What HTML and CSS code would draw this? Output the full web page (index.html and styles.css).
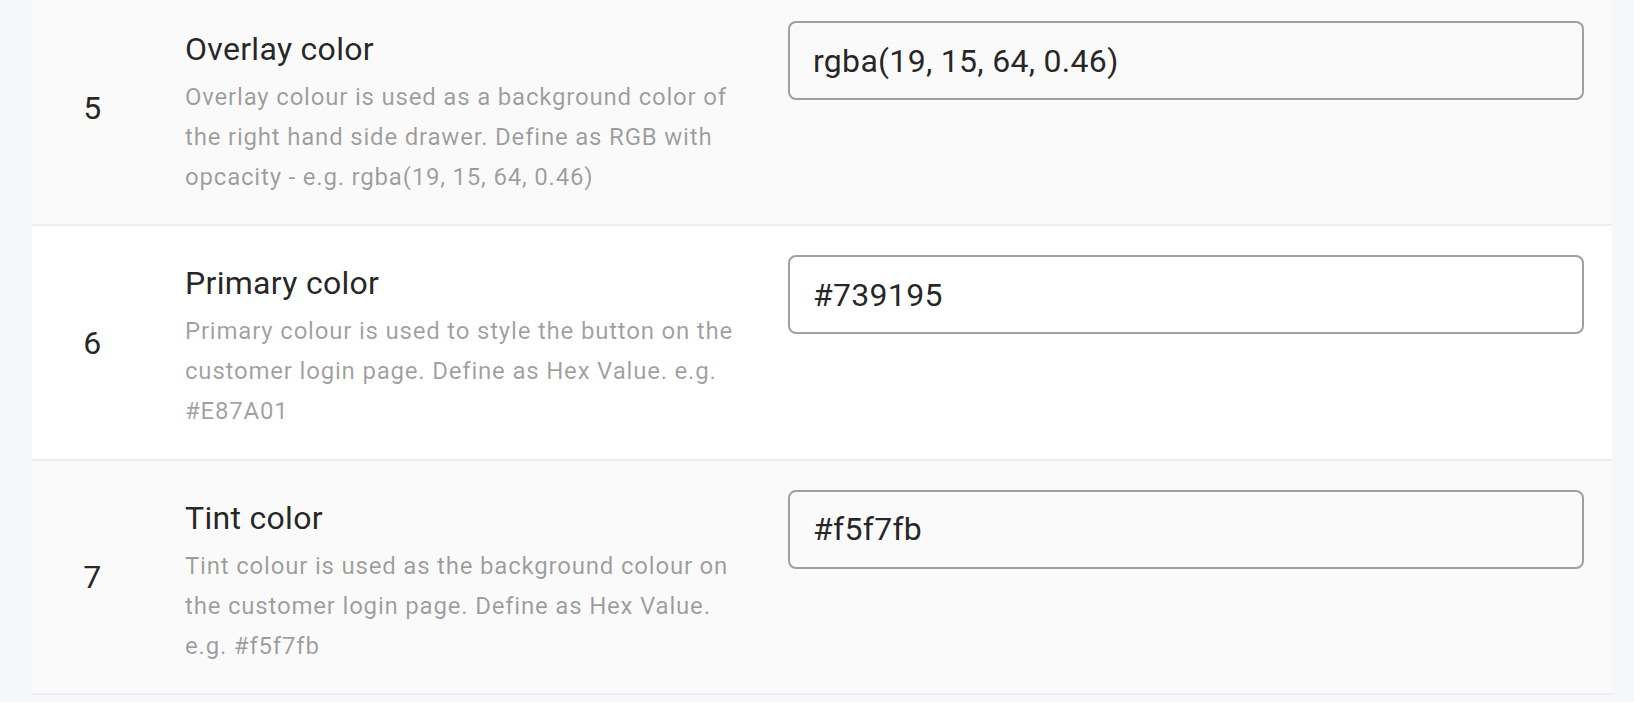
FILE: index.html
```html
<!DOCTYPE html>
<html lang="en">
<head>
<meta charset="utf-8">
<title>Theme settings</title>
<link rel="stylesheet" href="styles.css">
</head>
<body>
<div class="page">
  <div class="table">
    <div class="row row-alt">
      <div class="cell num">5</div>
      <div class="cell info">
        <div class="title">Overlay color</div>
        <div class="desc">Overlay colour is used as a background color of the right hand side drawer. Define as RGB with opcacity - e.g. rgba(19, 15, 64, 0.46)</div>
      </div>
      <div class="cell field">
        <input class="input" type="text" value="rgba(19, 15, 64, 0.46)">
      </div>
    </div>
    <div class="row">
      <div class="cell num">6</div>
      <div class="cell info">
        <div class="title">Primary color</div>
        <div class="desc">Primary colour is used to style the button on the customer login page. Define as Hex Value. e.g. #E87A01</div>
      </div>
      <div class="cell field">
        <input class="input" type="text" value="#739195">
      </div>
    </div>
    <div class="row row-alt">
      <div class="cell num">7</div>
      <div class="cell info">
        <div class="title">Tint color</div>
        <div class="desc">Tint colour is used as the background colour on the customer login page. Define as Hex Value. e.g. #f5f7fb</div>
      </div>
      <div class="cell field">
        <input class="input" type="text" value="#f5f7fb">
      </div>
    </div>
  </div>
</div>
</body>
</html>
```

FILE: styles.css
```css
html, body {
  margin: 0;
  padding: 0;
  background: #f5f7fa;
  font-family: Roboto, "Noto Sans", sans-serif;
  overflow: hidden;
}

.page {
  padding: 0 22px 0 32px;
}

.table {
  margin-top: -8px;
  display: flex;
  flex-direction: column;
}

.row {
  display: grid;
  grid-template-columns: 121px 603px 1fr;
  background: #ffffff;
  border-bottom: 2px solid #eeeeee;
}

.row-alt {
  background: #fafafa;
}

.num {
  align-self: center;
  text-align: center;
  font-size: 32px;
  line-height: 48px;
  color: rgba(0, 0, 0, 0.87);
  letter-spacing: 0.3px;
}

.info {
  padding: 33px 0 27px 32px;
}

.title {
  font-size: 32px;
  line-height: 48px;
  letter-spacing: 0.3px;
  color: rgba(0, 0, 0, 0.87);
  margin-bottom: 5px;
}

.desc {
  font-size: 24px;
  line-height: 1.66;
  letter-spacing: 0.8px;
  color: rgba(0, 0, 0, 0.38);
}

.field {
  padding: 29px 28px 0 32px;
}

.input {
  display: block;
  box-sizing: border-box;
  width: 100%;
  height: 79px;
  margin: 0;
  padding: 0 23px;
  border: 2px solid #a0a0a0;
  border-radius: 8px;
  background: transparent;
  font-family: Roboto, "Noto Sans", sans-serif;
  font-size: 32px;
  letter-spacing: 0.3px;
  color: rgba(0, 0, 0, 0.87);
  outline: none;
}
```
